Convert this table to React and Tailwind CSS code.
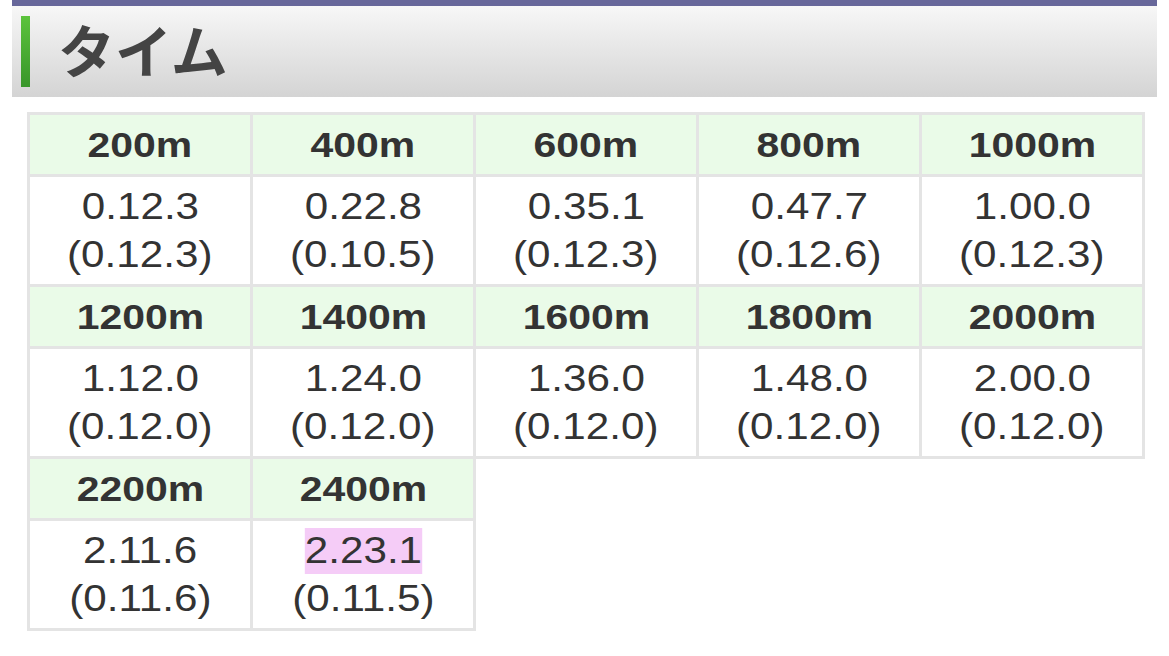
import React from 'react'

const rows = [
    [
        { dist: "200m", time: "0.12.3", lap: "(0.12.3)" },
        { dist: "400m", time: "0.22.8", lap: "(0.10.5)" },
        { dist: "600m", time: "0.35.1", lap: "(0.12.3)" },
        { dist: "800m", time: "0.47.7", lap: "(0.12.6)" },
        { dist: "1000m", time: "1.00.0", lap: "(0.12.3)" },
    ],
    [
        { dist: "1200m", time: "1.12.0", lap: "(0.12.0)" },
        { dist: "1400m", time: "1.24.0", lap: "(0.12.0)" },
        { dist: "1600m", time: "1.36.0", lap: "(0.12.0)" },
        { dist: "1800m", time: "1.48.0", lap: "(0.12.0)" },
        { dist: "2000m", time: "2.00.0", lap: "(0.12.0)" },
    ],
    [
        { dist: "2200m", time: "2.11.6", lap: "(0.11.6)" },
        { dist: "2400m", time: "2.23.1", lap: "(0.11.5)", best: true },
    ],
];

const App = () => {
  return (
    <div className="w-[1169px] h-[656px] bg-white overflow-hidden font-['Liberation_Sans',Arial,sans-serif]">
      {/* title bar */}
      <div className="ml-[12px] mr-[12px] border-t-[6px] border-[#67679a] h-[97px] bg-gradient-to-b from-[#f7f7f7] to-[#d4d4d4] flex items-center">
        <div className="ml-[9px] w-[9px] h-[71px] bg-gradient-to-b from-[#5cc33c] to-[#38962a]"></div>
        <h2 className="ml-[28px] mb-[6px] text-[57px] leading-none font-bold text-[#444] font-['Noto_Sans_CJK_JP',sans-serif]">タイム</h2>
      </div>

      {/* time table */}
      <table className="ml-[27px] mt-[15px] w-[1117px] border-collapse table-fixed">
        <tbody>
          {rows.map((row, i) => (
            <React.Fragment key={i}>
              <tr>
                {row.map((c) => (
                  <th key={c.dist} className="w-[223px] h-[62px] border-[3px] border-[#e4e4e4] bg-[#eafbe8] text-[35px] leading-none font-bold text-[#333] text-center align-middle">
                    <span className="inline-block scale-x-[1.17]">{c.dist}</span>
                  </th>
                ))}
              </tr>
              <tr>
                {row.map((c) => (
                  <td key={c.dist} className="w-[223px] h-[110px] border-[3px] border-[#e4e4e4] bg-white text-[37px] leading-[48px] text-[#333] text-center align-middle">
                    <div>
                      <span className={c.best ? "inline-block scale-x-[1.14] bg-[#f5ccf7] leading-[46px]" : "inline-block scale-x-[1.14]"}>{c.time}</span>
                    </div>
                    <div>
                      <span className="inline-block scale-x-[1.14]">{c.lap}</span>
                    </div>
                  </td>
                ))}
              </tr>
            </React.Fragment>
          ))}
        </tbody>
      </table>
    </div>
  )
}

export default App
